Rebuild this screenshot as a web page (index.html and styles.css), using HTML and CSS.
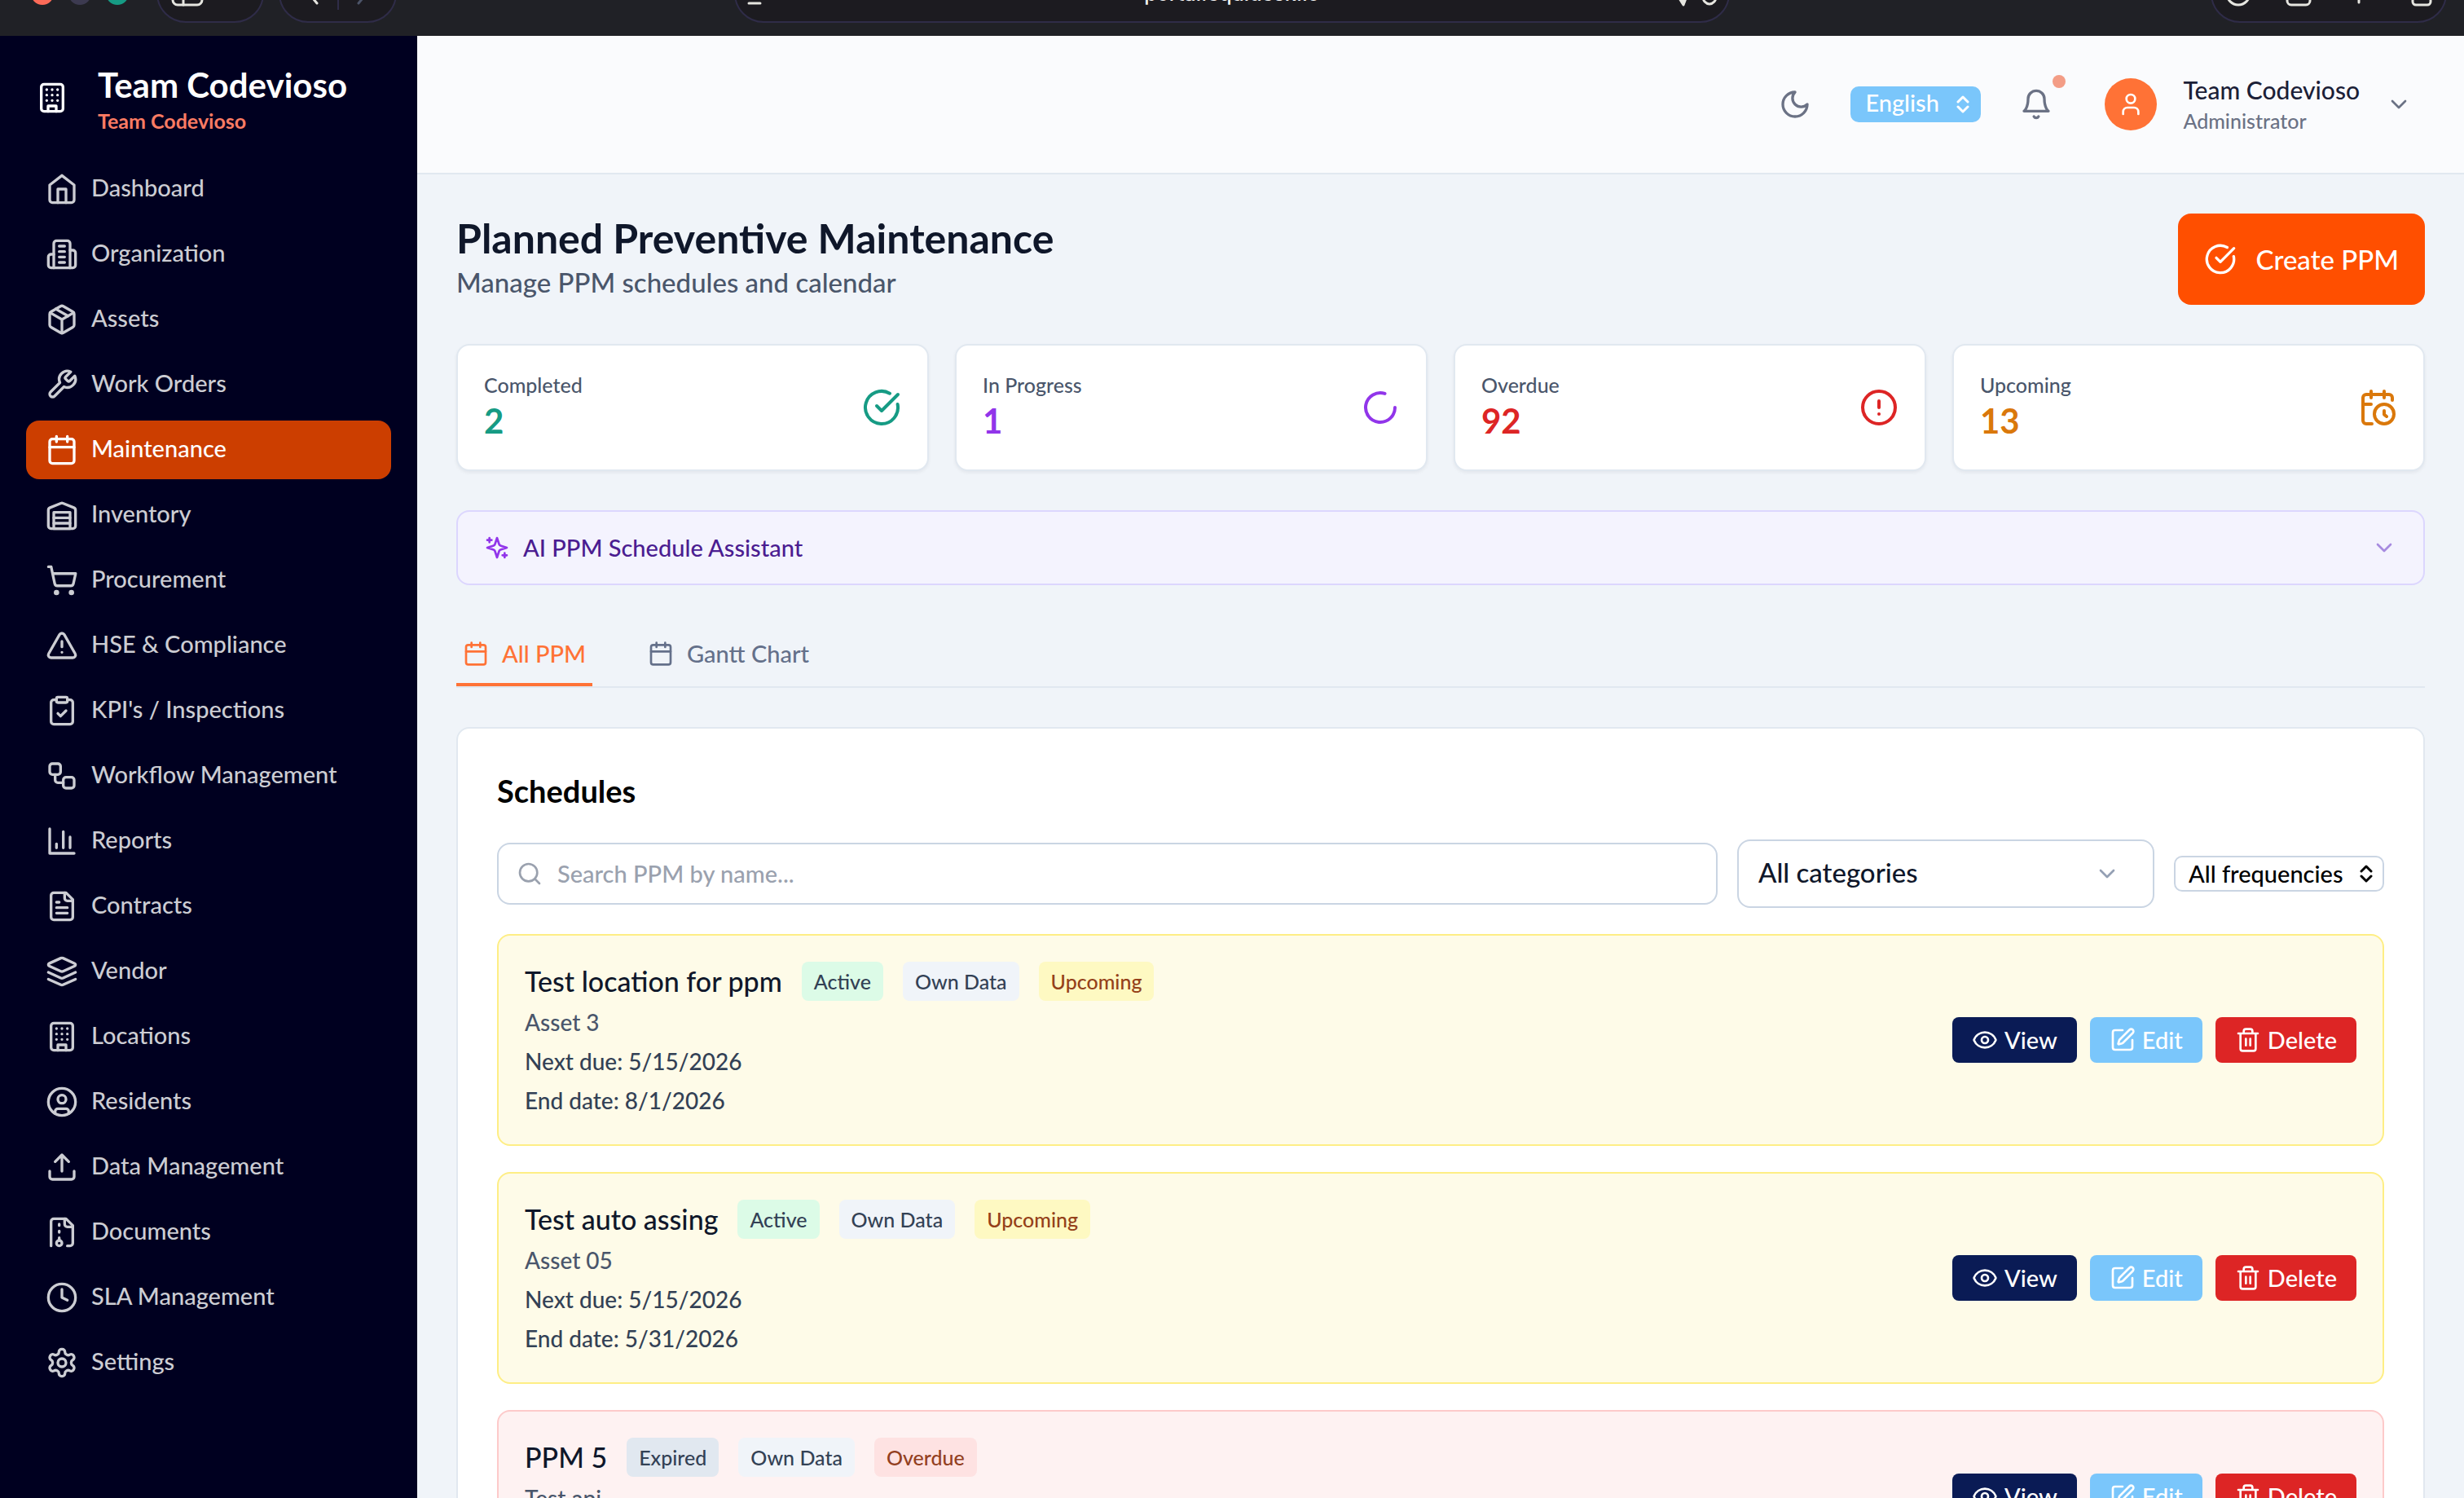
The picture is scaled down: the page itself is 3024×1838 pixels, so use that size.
FILE: index.html
```html
<!DOCTYPE html>
<html lang="en">
<head>
<meta charset="utf-8">
<title>Planned Preventive Maintenance</title>
<link rel="stylesheet" href="styles.css">
</head>
<body>
<svg class="sprite" aria-hidden="true">
  <symbol id="i-building" viewBox="0 0 24 24"><rect width="16" height="20" x="4" y="2" rx="2"/><path d="M9 22v-4h6v4M8 6h.01M16 6h.01M12 6h.01M12 10h.01M12 14h.01M16 10h.01M16 14h.01M8 10h.01M8 14h.01"/></symbol>
  <symbol id="i-home" viewBox="0 0 24 24"><path d="m3 9 9-7 9 7v11a2 2 0 0 1-2 2H5a2 2 0 0 1-2-2z"/><path d="M9 22V12h6v10"/></symbol>
  <symbol id="i-org" viewBox="0 0 24 24"><path d="M6 22V4a2 2 0 0 1 2-2h8a2 2 0 0 1 2 2v18Z"/><path d="M6 12H4a2 2 0 0 0-2 2v6a2 2 0 0 0 2 2h2M18 9h2a2 2 0 0 1 2 2v9a2 2 0 0 1-2 2h-2M10 6h4M10 10h4M10 14h4M10 18h4"/></symbol>
  <symbol id="i-package" viewBox="0 0 24 24"><path d="m7.5 4.27 9 5.15"/><path d="M21 8a2 2 0 0 0-1-1.73l-7-4a2 2 0 0 0-2 0l-7 4A2 2 0 0 0 3 8v8a2 2 0 0 0 1 1.73l7 4a2 2 0 0 0 2 0l7-4A2 2 0 0 0 21 16Z"/><path d="m3.3 7 8.7 5 8.7-5M12 22V12"/></symbol>
  <symbol id="i-wrench" viewBox="0 0 24 24"><path d="M14.7 6.3a1 1 0 0 0 0 1.4l1.6 1.6a1 1 0 0 0 1.4 0l3.77-3.77a6 6 0 0 1-7.94 7.94l-6.91 6.91a2.12 2.12 0 0 1-3-3l6.91-6.91a6 6 0 0 1 7.94-7.94l-3.76 3.76z"/></symbol>
  <symbol id="i-calendar" viewBox="0 0 24 24"><path d="M8 2v4M16 2v4M3 10h18"/><rect width="18" height="18" x="3" y="4" rx="2"/></symbol>
  <symbol id="i-warehouse" viewBox="0 0 24 24"><path d="M22 8.35V20a2 2 0 0 1-2 2H4a2 2 0 0 1-2-2V8.35A2 2 0 0 1 3.26 6.5l8-3.2a2 2 0 0 1 1.48 0l8 3.2A2 2 0 0 1 22 8.35Z"/><path d="M6 18h12M6 14h12"/><rect width="12" height="12" x="6" y="10"/></symbol>
  <symbol id="i-cart" viewBox="0 0 24 24"><circle cx="8" cy="21" r="1"/><circle cx="19" cy="21" r="1"/><path d="M2.05 2.05h2l2.66 12.42a2 2 0 0 0 2 1.58h9.78a2 2 0 0 0 1.95-1.57l1.65-7.43H5.12"/></symbol>
  <symbol id="i-triangle" viewBox="0 0 24 24"><path d="m21.73 18-8-14a2 2 0 0 0-3.48 0l-8 14A2 2 0 0 0 4 21h16a2 2 0 0 0 1.73-3M12 9v4M12 17h.01"/></symbol>
  <symbol id="i-clipboard" viewBox="0 0 24 24"><rect width="8" height="4" x="8" y="2" rx="1"/><path d="M16 4h2a2 2 0 0 1 2 2v14a2 2 0 0 1-2 2H6a2 2 0 0 1-2-2V6a2 2 0 0 1 2-2h2"/><path d="m9 14 2 2 4-4"/></symbol>
  <symbol id="i-workflow" viewBox="0 0 24 24"><rect width="8" height="8" x="3" y="3" rx="2"/><path d="M7 11v4a2 2 0 0 0 2 2h4"/><rect width="8" height="8" x="13" y="13" rx="2"/></symbol>
  <symbol id="i-chart" viewBox="0 0 24 24"><path d="M3 3v18h18M18 17V9M13 17V5M8 17v-3"/></symbol>
  <symbol id="i-file" viewBox="0 0 24 24"><path d="M15 2H6a2 2 0 0 0-2 2v16a2 2 0 0 0 2 2h12a2 2 0 0 0 2-2V7Z"/><path d="M14 2v4a2 2 0 0 0 2 2h4M10 9H8M16 13H8M16 17H8"/></symbol>
  <symbol id="i-layers" viewBox="0 0 24 24"><path d="M12.83 2.18a2 2 0 0 0-1.66 0L2.6 6.08a1 1 0 0 0 0 1.83l8.58 3.91a2 2 0 0 0 1.66 0l8.58-3.9a1 1 0 0 0 0-1.83Z"/><path d="m22 17.65-9.17 4.16a2 2 0 0 1-1.66 0L2 17.65M22 12.65l-9.17 4.16a2 2 0 0 1-1.66 0L2 12.65"/></symbol>
  <symbol id="i-resident" viewBox="0 0 24 24"><circle cx="12" cy="12" r="10"/><circle cx="12" cy="10" r="3"/><path d="M7 20.662V19a2 2 0 0 1 2-2h6a2 2 0 0 1 2 2v1.662"/></symbol>
  <symbol id="i-upload" viewBox="0 0 24 24"><path d="M21 15v4a2 2 0 0 1-2 2H5a2 2 0 0 1-2-2v-4M17 8l-5-5-5 5M12 3v12"/></symbol>
  <symbol id="i-archive" viewBox="0 0 24 24"><path d="M16 22h2a2 2 0 0 0 2-2V7l-5-5H6a2 2 0 0 0-2 2v18"/><path d="M14 2v4a2 2 0 0 0 2 2h4M10 7V6M10 12v-1M10 18v-2"/><circle cx="10" cy="20" r="2"/></symbol>
  <symbol id="i-clock" viewBox="0 0 24 24"><circle cx="12" cy="12" r="10"/><path d="M12 6v6l4 2"/></symbol>
  <symbol id="i-settings" viewBox="0 0 24 24"><path d="M12.22 2h-.44a2 2 0 0 0-2 2v.18a2 2 0 0 1-1 1.73l-.43.25a2 2 0 0 1-2 0l-.15-.08a2 2 0 0 0-2.73.73l-.22.38a2 2 0 0 0 .73 2.73l.15.1a2 2 0 0 1 1 1.72v.51a2 2 0 0 1-1 1.74l-.15.09a2 2 0 0 0-.73 2.73l.22.38a2 2 0 0 0 2.73.73l.15-.08a2 2 0 0 1 2 0l.43.25a2 2 0 0 1 1 1.73V20a2 2 0 0 0 2 2h.44a2 2 0 0 0 2-2v-.18a2 2 0 0 1 1-1.73l.43-.25a2 2 0 0 1 2 0l.15.08a2 2 0 0 0 2.73-.73l.22-.39a2 2 0 0 0-.73-2.73l-.15-.08a2 2 0 0 1-1-1.74v-.5a2 2 0 0 1 1-1.74l.15-.09a2 2 0 0 0 .73-2.73l-.22-.38a2 2 0 0 0-2.73-.73l-.15.08a2 2 0 0 1-2 0l-.43-.25a2 2 0 0 1-1-1.73V4a2 2 0 0 0-2-2z"/><circle cx="12" cy="12" r="3"/></symbol>
  <symbol id="i-moon" viewBox="0 0 24 24"><path d="M12 3a6 6 0 0 0 9 9 9 9 0 1 1-9-9Z"/></symbol>
  <symbol id="i-bell" viewBox="0 0 24 24"><path d="M6 8a6 6 0 0 1 12 0c0 7 3 9 3 9H3s3-2 3-9M10.3 21a1.94 1.94 0 0 0 3.4 0"/></symbol>
  <symbol id="i-user" viewBox="0 0 24 24"><path d="M19 21v-2a4 4 0 0 0-4-4H9a4 4 0 0 0-4 4v2"/><circle cx="12" cy="7" r="4"/></symbol>
  <symbol id="i-down" viewBox="0 0 24 24"><path d="m6 9 6 6 6-6"/></symbol>
  <symbol id="i-updown" viewBox="0 0 16 24"><path d="m2 9 6-6 6 6M2 15l6 6 6-6"/></symbol>
  <symbol id="i-check" viewBox="0 0 24 24"><path d="M21.801 10A10 10 0 1 1 17 3.335"/><path d="m9 11 3 3L22 4"/></symbol>
  <symbol id="i-loader" viewBox="0 0 24 24"><path d="M21 12a9 9 0 1 1-6.219-8.56"/></symbol>
  <symbol id="i-alert" viewBox="0 0 24 24"><circle cx="12" cy="12" r="10"/><path d="M12 8v4M12 16h.01"/></symbol>
  <symbol id="i-calclock" viewBox="0 0 24 24"><path d="M21 7.5V6a2 2 0 0 0-2-2H5a2 2 0 0 0-2 2v14a2 2 0 0 0 2 2h3.5M16 2v4M8 2v4M3 10h5M17.5 17.5 16 16.3V14"/><circle cx="16" cy="16" r="6"/></symbol>
  <symbol id="i-sparkles" viewBox="0 0 24 24"><path d="m12 3-1.912 5.813a2 2 0 0 1-1.275 1.275L3 12l5.813 1.912a2 2 0 0 1 1.275 1.275L12 21l1.912-5.813a2 2 0 0 1 1.275-1.275L21 12l-5.813-1.912a2 2 0 0 1-1.275-1.275L12 3ZM5 3v4M19 17v4M3 5h4M17 19h4"/></symbol>
  <symbol id="i-search" viewBox="0 0 24 24"><circle cx="11" cy="11" r="8"/><path d="m21 21-4.3-4.3"/></symbol>
  <symbol id="i-eye" viewBox="0 0 24 24"><path d="M2.062 12.348a1 1 0 0 1 0-.696 10.75 10.75 0 0 1 19.876 0 1 1 0 0 1 0 .696 10.75 10.75 0 0 1-19.876 0"/><circle cx="12" cy="12" r="3"/></symbol>
  <symbol id="i-edit" viewBox="0 0 24 24"><path d="M12 3H5a2 2 0 0 0-2 2v14a2 2 0 0 0 2 2h14a2 2 0 0 0 2-2v-7"/><path d="M18.375 2.625a1 1 0 0 1 3 3l-9.013 9.014a2 2 0 0 1-.853.505l-2.873.84a.5.5 0 0 1-.62-.62l.84-2.873a2 2 0 0 1 .506-.852z"/></symbol>
  <symbol id="i-trash" viewBox="0 0 24 24"><path d="M3 6h18M19 6v14a2 2 0 0 1-2 2H7a2 2 0 0 1-2-2V6M8 6V4a2 2 0 0 1 2-2h4a2 2 0 0 1 2 2v2M10 11v6M14 11v6"/></symbol>
</svg>

<div class="browser-bar">
  <div class="bar-left">
    <span class="lights"><i class="light light-close"></i><i class="light light-min"></i><i class="light light-max"></i></span>
    <span class="pill pill-panel"><svg class="bar-icon" viewBox="0 0 40 32"><rect x="2" y="2" width="36" height="28" rx="6"/><path d="M15 2v28"/></svg></span>
    <span class="pill pill-nav">
      <svg class="bar-chevron" viewBox="0 0 16 28"><path d="M13 2 3 14l10 12"/></svg>
      <i class="pill-divider"></i>
      <svg class="bar-chevron is-dim" viewBox="0 0 16 28"><path d="m3 2 10 12L3 26"/></svg>
    </span>
  </div>
  <div class="pill pill-url">
    <svg class="bar-glyph" viewBox="0 0 20 32"><path d="M3 4h14M3 28h14"/></svg>
    <span class="url">portal.equidesk.io</span>
    <span class="url-tools">
      <svg class="bar-square" viewBox="0 0 32 32"><path class="solid" d="M12 4h18v18h-3l-3 8-5-8h-7z"/><path d="M2 4v16h2"/></svg>
      <svg class="bar-glyph" viewBox="0 0 20 32"><path d="M18 16v4a8 9 0 0 1-16 0v-4"/></svg>
    </span>
  </div>
  <div class="bar-right">
    <span class="pill pill-actions">
      <svg class="bar-square" viewBox="0 0 32 32"><circle cx="16" cy="16" r="14"/><path d="M16 8v14"/></svg>
      <svg class="bar-square" viewBox="0 0 32 32"><rect x="2" y="8" width="28" height="22" rx="5"/></svg>
      <svg class="bar-square" viewBox="0 0 32 32"><path d="M16 3v24M4 15h24"/></svg>
      <svg class="bar-square" viewBox="0 0 32 32"><rect x="8" y="8" width="22" height="22" rx="4"/><path d="M8 22H2V2h20v6"/></svg>
    </span>
  </div>
</div>

<div class="app">
  <aside class="sidebar">
    <div class="brand">
      <span class="brand-logo"><svg class="icon icon-lg"><use href="#i-building"/></svg></span>
      <div>
        <div class="brand-name">Team Codevioso</div>
        <div class="brand-sub">Team Codevioso</div>
      </div>
    </div>
    <nav class="nav">
      <a class="nav-link" href="#"><svg class="icon icon-lg"><use href="#i-home"/></svg><span class="nav-text">Dashboard</span></a>
      <a class="nav-link" href="#"><svg class="icon icon-lg"><use href="#i-org"/></svg><span class="nav-text">Organization</span></a>
      <a class="nav-link" href="#"><svg class="icon icon-lg"><use href="#i-package"/></svg><span class="nav-text">Assets</span></a>
      <a class="nav-link" href="#"><svg class="icon icon-lg"><use href="#i-wrench"/></svg><span class="nav-text">Work Orders</span></a>
      <a class="nav-link is-active" href="#" aria-current="page"><svg class="icon icon-lg"><use href="#i-calendar"/></svg><span class="nav-text">Maintenance</span></a>
      <a class="nav-link" href="#"><svg class="icon icon-lg"><use href="#i-warehouse"/></svg><span class="nav-text">Inventory</span></a>
      <a class="nav-link" href="#"><svg class="icon icon-lg"><use href="#i-cart"/></svg><span class="nav-text">Procurement</span></a>
      <a class="nav-link" href="#"><svg class="icon icon-lg"><use href="#i-triangle"/></svg><span class="nav-text">HSE &amp; Compliance</span></a>
      <a class="nav-link" href="#"><svg class="icon icon-lg"><use href="#i-clipboard"/></svg><span class="nav-text">KPI's / Inspections</span></a>
      <a class="nav-link" href="#"><svg class="icon icon-lg"><use href="#i-workflow"/></svg><span class="nav-text">Workflow Management</span></a>
      <a class="nav-link" href="#"><svg class="icon icon-lg"><use href="#i-chart"/></svg><span class="nav-text">Reports</span></a>
      <a class="nav-link" href="#"><svg class="icon icon-lg"><use href="#i-file"/></svg><span class="nav-text">Contracts</span></a>
      <a class="nav-link" href="#"><svg class="icon icon-lg"><use href="#i-layers"/></svg><span class="nav-text">Vendor</span></a>
      <a class="nav-link" href="#"><svg class="icon icon-lg"><use href="#i-building"/></svg><span class="nav-text">Locations</span></a>
      <a class="nav-link" href="#"><svg class="icon icon-lg"><use href="#i-resident"/></svg><span class="nav-text">Residents</span></a>
      <a class="nav-link" href="#"><svg class="icon icon-lg"><use href="#i-upload"/></svg><span class="nav-text">Data Management</span></a>
      <a class="nav-link" href="#"><svg class="icon icon-lg"><use href="#i-archive"/></svg><span class="nav-text">Documents</span></a>
      <a class="nav-link" href="#"><svg class="icon icon-lg"><use href="#i-clock"/></svg><span class="nav-text">SLA Management</span></a>
      <a class="nav-link" href="#"><svg class="icon icon-lg"><use href="#i-settings"/></svg><span class="nav-text">Settings</span></a>
    </nav>
  </aside>

  <div class="page">
    <header class="topbar">
      <button class="icon-btn" type="button" aria-label="Toggle dark mode"><svg class="icon icon-lg"><use href="#i-moon"/></svg></button>
      <span class="select select-lang">
        <select aria-label="Language"><option>English</option></select>
        <svg class="updown"><use href="#i-updown"/></svg>
      </span>
      <button class="icon-btn bell" type="button" aria-label="Notifications"><svg class="icon icon-lg"><use href="#i-bell"/></svg><i class="bell-dot"></i></button>
      <button class="account" type="button">
        <span class="avatar"><svg class="icon"><use href="#i-user"/></svg></span>
        <span class="account-text"><span class="account-name">Team Codevioso</span><span class="account-role">Administrator</span></span>
        <svg class="icon"><use href="#i-down"/></svg>
      </button>
    </header>

    <main class="content">
      <div class="page-head">
        <div>
          <h1 class="title">Planned Preventive Maintenance</h1>
          <p class="subtitle">Manage PPM schedules and calendar</p>
        </div>
        <button class="create" type="button"><svg class="icon icon-lg"><use href="#i-check"/></svg>Create PPM</button>
      </div>

      <section class="stats">
        <div class="stat stat-green"><div><div class="stat-label">Completed</div><div class="stat-value">2</div></div><svg class="icon icon-xl"><use href="#i-check"/></svg></div>
        <div class="stat stat-purple"><div><div class="stat-label">In Progress</div><div class="stat-value">1</div></div><svg class="icon icon-xl"><use href="#i-loader"/></svg></div>
        <div class="stat stat-red"><div><div class="stat-label">Overdue</div><div class="stat-value">92</div></div><svg class="icon icon-xl"><use href="#i-alert"/></svg></div>
        <div class="stat stat-amber"><div><div class="stat-label">Upcoming</div><div class="stat-value">13</div></div><svg class="icon icon-xl"><use href="#i-calclock"/></svg></div>
      </section>

      <button class="assistant" type="button" aria-expanded="false">
        <svg class="icon assistant-mark"><use href="#i-sparkles"/></svg>
        <span class="assistant-text">AI PPM Schedule Assistant</span>
        <svg class="icon assistant-chevron"><use href="#i-down"/></svg>
      </button>

      <div class="tabs" role="tablist">
        <button class="tab is-active" type="button" role="tab" aria-selected="true"><svg class="icon"><use href="#i-calendar"/></svg>All PPM</button>
        <button class="tab" type="button" role="tab" aria-selected="false"><svg class="icon"><use href="#i-calendar"/></svg>Gantt Chart</button>
      </div>

      <section class="card">
        <h2 class="card-title">Schedules</h2>
        <div class="filters">
          <label class="search">
            <svg class="icon"><use href="#i-search"/></svg>
            <input type="text" placeholder="Search PPM by name..." aria-label="Search PPM by name">
          </label>
          <span class="select select-category">
            <select aria-label="Category"><option>All categories</option></select>
            <svg class="icon"><use href="#i-down"/></svg>
          </span>
          <span class="select select-frequency">
            <select aria-label="Frequency"><option>All frequencies</option></select>
            <svg class="updown"><use href="#i-updown"/></svg>
          </span>
        </div>

        <article class="item item-upcoming">
          <div>
            <div class="item-head"><h3 class="item-title">Test location for ppm</h3><span class="tag tag-active">Active</span><span class="tag tag-own">Own Data</span><span class="tag tag-upcoming">Upcoming</span></div>
            <p class="item-asset">Asset 3</p>
            <p class="item-line">Next due: 5/15/2026</p>
            <p class="item-line">End date: 8/1/2026</p>
          </div>
          <div class="actions">
            <button class="btn btn-view" type="button"><svg class="icon"><use href="#i-eye"/></svg>View</button>
            <button class="btn btn-edit" type="button"><svg class="icon"><use href="#i-edit"/></svg>Edit</button>
            <button class="btn btn-delete" type="button"><svg class="icon"><use href="#i-trash"/></svg>Delete</button>
          </div>
        </article>

        <article class="item item-upcoming">
          <div>
            <div class="item-head"><h3 class="item-title">Test auto assing</h3><span class="tag tag-active">Active</span><span class="tag tag-own">Own Data</span><span class="tag tag-upcoming">Upcoming</span></div>
            <p class="item-asset">Asset 05</p>
            <p class="item-line">Next due: 5/15/2026</p>
            <p class="item-line">End date: 5/31/2026</p>
          </div>
          <div class="actions">
            <button class="btn btn-view" type="button"><svg class="icon"><use href="#i-eye"/></svg>View</button>
            <button class="btn btn-edit" type="button"><svg class="icon"><use href="#i-edit"/></svg>Edit</button>
            <button class="btn btn-delete" type="button"><svg class="icon"><use href="#i-trash"/></svg>Delete</button>
          </div>
        </article>

        <article class="item item-overdue">
          <div>
            <div class="item-head"><h3 class="item-title">PPM 5</h3><span class="tag tag-expired">Expired</span><span class="tag tag-own">Own Data</span><span class="tag tag-overdue">Overdue</span></div>
            <p class="item-asset">Test api</p>
            <p class="item-line">Next due: 5/1/2026</p>
          </div>
          <div class="actions">
            <button class="btn btn-view" type="button"><svg class="icon"><use href="#i-eye"/></svg>View</button>
            <button class="btn btn-edit" type="button"><svg class="icon"><use href="#i-edit"/></svg>Edit</button>
            <button class="btn btn-delete" type="button"><svg class="icon"><use href="#i-trash"/></svg>Delete</button>
          </div>
        </article>
      </section>
    </main>
  </div>
</div>
</body>
</html>
```
FILE: styles.css
```css
*, *::before, *::after { box-sizing: border-box; }

body {
  margin: 0;
  height: 100vh;
  display: flex;
  flex-direction: column;
  overflow: hidden;
  background: #f0f4f9;
  color: #0f172a;
  font-family: Lato, "Open Sans", sans-serif;
  font-size: 29px;
  font-weight: 500;
  line-height: 40px;
}

h1, h2, h3, p { margin: 0; }

button, select, input {
  font: inherit;
  color: inherit;
  margin: 0;
  padding: 0;
  border: 0;
  background: none;
}

button { cursor: pointer; }
.sprite { display: none; }

.icon {
  flex: none;
  width: 32px;
  height: 32px;
  fill: none;
  stroke: currentColor;
  stroke-width: 2;
  stroke-linecap: round;
  stroke-linejoin: round;
}
.icon-lg { width: 40px; height: 40px; }
.icon-xl { width: 48px; height: 48px; }

/* Browser toolbar: its controls rise past the top edge of the window */
.browser-bar {
  flex: none;
  height: 44px;
  padding: 0 21px 16px 38px;
  display: grid;
  grid-template-columns: minmax(0, 471px) minmax(0, 1fr) minmax(0, 488px);
  column-gap: 392px;
  align-items: center;
  align-content: end;
  overflow: hidden;
  background: #202126;
}
.bar-left { display: flex; align-items: center; gap: 18px; }
.bar-right { display: flex; justify-content: flex-end; }
.lights { display: flex; gap: 18px; margin-right: 16px; }
.light { width: 28px; height: 28px; border-radius: 50%; }
.light-close { background: #fb6a58; }
.light-min { background: #3c3a50; }
.light-max { background: #169b84; }
.pill {
  height: 72px;
  display: flex;
  align-items: center;
  border: 2px solid #2f2c48;
  border-radius: 36px;
  background: #1c1b20;
}
.pill svg {
  flex: none;
  fill: none;
  stroke: #e6e6e0;
  stroke-width: 3;
  stroke-linecap: round;
  stroke-linejoin: round;
}
.pill svg .solid { fill: #e6e6e0; }
.pill svg.is-dim { stroke: #4c5468; }
.pill-panel { width: 132px; padding-left: 16px; }
.pill-nav { width: 145px; padding: 0 32px; justify-content: space-between; }
.pill-divider { width: 2px; height: 40px; background: #2f2c48; }
.pill-url {
  padding: 0 13px;
  display: grid;
  grid-template-columns: 1fr auto 1fr;
}
.pill-actions { width: 290px; padding: 0 16px; justify-content: space-between; }
.bar-icon { width: 40px; height: 32px; }
.bar-chevron { width: 16px; height: 28px; }
.bar-glyph { width: 20px; height: 32px; }
.bar-square { width: 32px; height: 32px; }
.url { color: #f4f4f4; font-family: Inter, sans-serif; font-size: 25px; }
.url-tools { display: flex; justify-content: flex-end; gap: 14px; }

.app { flex: 1; min-height: 0; display: flex; }

/* Sidebar */
.sidebar {
  flex: none;
  width: 512px;
  padding: 32px;
  overflow: hidden;
  background: #000020;
  color: #cccdd3;
}
.brand { display: flex; align-items: center; gap: 24px; color: #fff; }
.brand-logo { width: 64px; display: flex; justify-content: center; }
.brand-name { font-size: 42px; line-height: 56px; font-weight: 700; }
.brand-sub { font-size: 25px; line-height: 32px; font-weight: 700; color: #fb7b63; }
.nav { display: flex; flex-direction: column; gap: 8px; margin-top: 32px; }
.nav-link {
  height: 72px;
  padding: 0 24px;
  display: flex;
  align-items: center;
  gap: 16px;
  border-radius: 16px;
  color: inherit;
  text-decoration: none;
}
.nav-text { padding-bottom: 4px; }
.nav-link.is-active { background: #cc3e00; color: #fff; }

/* Top bar */
.page { flex: 1; min-width: 0; display: flex; flex-direction: column; }
.topbar {
  flex: none;
  height: 170px;
  padding: 0 64px;
  display: flex;
  align-items: center;
  justify-content: flex-end;
  gap: 48px;
  border-bottom: 2px solid #e1e8f0;
  background: #fafbfd;
}
.icon-btn { display: flex; color: #6b7285; }
.bell { position: relative; margin-right: 16px; }
.bell-dot {
  position: absolute;
  top: -16px;
  right: -16px;
  width: 16px;
  height: 16px;
  border-radius: 50%;
  background: #f39d86;
}
.account { display: flex; align-items: center; gap: 32px; text-align: left; color: #6b7285; }
.avatar {
  width: 64px;
  height: 64px;
  display: flex;
  align-items: center;
  justify-content: center;
  border-radius: 50%;
  background: #ff7236;
  color: #fff;
}
.account-text { display: flex; flex-direction: column; }
.account-name { font-size: 30px; color: #1b2037; }
.account-role { font-size: 25px; line-height: 36px; }

.select { position: relative; display: flex; flex: none; }
.select select { width: 100%; appearance: none; }
.select svg { position: absolute; pointer-events: none; }
.updown {
  top: 10px;
  right: 14px;
  width: 16px;
  height: 24px;
  fill: none;
  stroke: currentColor;
  stroke-width: 3;
  stroke-linecap: round;
  stroke-linejoin: round;
}
.select-lang { width: 160px; height: 44px; border-radius: 10px; background: #7ac6fb; color: #fff; }
.select-lang select { padding: 0 18px 4px; }

/* Page content */
.content {
  flex: 1;
  min-height: 0;
  padding: 48px;
  display: flex;
  flex-direction: column;
  gap: 48px;
  overflow-y: auto;
  scrollbar-width: none;
}
.content > * { flex: none; }
.page-head { display: flex; align-items: center; justify-content: space-between; }
.title { font-size: 50px; line-height: 60px; font-weight: 700; }
.subtitle { padding-bottom: 4px; font-size: 33px; line-height: 48px; color: #4a566b; }
.create {
  height: 112px;
  padding: 0 32px;
  display: flex;
  align-items: center;
  gap: 24px;
  border-radius: 16px;
  background: #ff4f00;
  color: #fff;
  font-size: 33px;
}

.stats { display: grid; grid-template-columns: repeat(4, minmax(0, 1fr)); gap: 32px; }
.stat {
  padding: 32px;
  display: flex;
  align-items: center;
  justify-content: space-between;
  border: 2px solid #e1e8f0;
  border-radius: 16px;
  background: #fff;
  box-shadow: 0 2px 4px rgba(15, 23, 42, 0.06);
}
.stat-label { font-size: 25px; line-height: 32px; color: #4a566b; }
.stat-value { font-size: 42px; line-height: 56px; font-weight: 700; }
.stat-green { color: #169b84; }
.stat-purple { color: #9135ea; }
.stat-red { color: #dd2525; }
.stat-amber { color: #da780b; }

.assistant {
  padding: 24px 32px;
  display: flex;
  align-items: center;
  gap: 16px;
  border: 2px solid #dcd6fe;
  border-radius: 16px;
  background: #f4f3fe;
  text-align: left;
}
.assistant-mark { color: #9135ea; }
.assistant-text { flex: 1; color: #4b1d91; }
.assistant-chevron { color: #a78be0; }

.tabs { display: flex; gap: 60px; border-bottom: 2px solid #e1e8f0; }
.tab {
  padding: 16px 8px;
  display: flex;
  align-items: center;
  gap: 16px;
  border-bottom: 4px solid transparent;
  color: #64708a;
}
.tab.is-active { border-color: #ff7236; color: #ff7236; }

.card {
  padding: 48px;
  display: flex;
  flex-direction: column;
  gap: 32px;
  border: 2px solid #e1e8f0;
  border-radius: 16px;
  background: #fff;
}
.card-title { font-size: 38px; line-height: 56px; font-weight: 700; color: #000; }
.filters { display: flex; align-items: center; gap: 24px; }
.search {
  flex: 1;
  height: 76px;
  padding: 0 22px;
  display: flex;
  align-items: center;
  gap: 18px;
  border: 2px solid #cad5e3;
  border-radius: 16px;
  color: #9aa1ae;
}
.search input { flex: 1; min-width: 0; outline: 0; color: #0f172a; }
.search input::placeholder { color: #9aa1ae; opacity: 1; }
.select-category {
  width: 512px;
  height: 84px;
  border: 2px solid #cad5e3;
  border-radius: 16px;
  font-size: 33px;
}
.select-category select { padding: 0 24px 4px; }
.select-category svg { top: 24px; right: 40px; color: #94a0b4; }
.select-frequency {
  width: 258px;
  height: 44px;
  border: 2px solid #cad5e3;
  border-radius: 10px;
  color: #000;
}
.select-frequency select { padding: 0 16px 4px; }
.select-frequency .updown { top: 8px; right: 12px; }

.item {
  padding: 32px;
  display: flex;
  align-items: center;
  justify-content: space-between;
  border: 2px solid;
  border-radius: 16px;
}
.item-upcoming { border-color: #feee85; background: #fefbe8; }
.item-overdue { border-color: #fdcaca; background: #fef2f2; }
.item-head { display: flex; align-items: center; gap: 24px; }
.item-title { font-size: 34px; line-height: 48px; font-weight: 500; }
.item-asset { margin-top: 6px; font-size: 28px; color: #4a566b; }
.item-line { margin-top: 8px; font-size: 28px; color: #334155; }
.item-line:last-child { margin-bottom: 2px; }
.tag { padding: 0 15px; border-radius: 8px; font-size: 25px; line-height: 48px; color: #334155; }
.tag-active { background: #dcfbe7; }
.tag-own { background: #f0f4f9; }
.tag-upcoming { background: #fef9c2; color: #954119; }
.tag-expired { background: #e1e8f0; }
.tag-overdue { background: #fee2e2; color: #93401f; }

.actions { display: flex; gap: 16px; }
.btn {
  height: 56px;
  padding: 0 24px;
  display: flex;
  align-items: center;
  gap: 8px;
  border-radius: 8px;
  color: #fff;
}
.btn-view { background: #0a1b55; }
.btn-edit { background: #7ac6fb; }
.btn-delete { background: #dd2525; }
```
